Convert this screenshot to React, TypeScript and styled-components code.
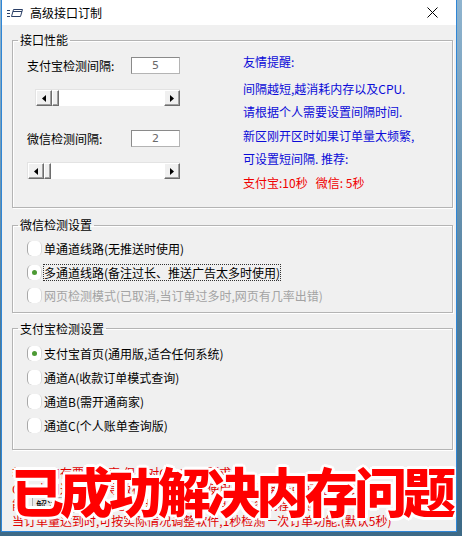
import * as React from 'react';
import styled, { createGlobalStyle } from 'styled-components';

const GlobalStyle = createGlobalStyle`
	html, body {
		margin: 0;
		padding: 0;
	}
	body {
		width: 462px;
		height: 536px;
		overflow: hidden;
		font-family: "Noto Sans CJK SC", "DejaVu Sans", sans-serif;
		font-size: 12px;
		color: #000;
	}
`;

const Desktop = styled.div`
	width: 462px;
	height: 536px;
	box-sizing: border-box;
	padding: 0 5px 4px 1px;
	background: linear-gradient(180deg, #8fb4cf 0%, #4f7d9c 60%, #3d6a86 100%);
`;

const Window = styled.div`
	position: relative;
	height: 100%;
	box-sizing: border-box;
	border: 1px solid #2f86d6;
	border-top: none;
	background: #f0f0f0;
	display: flex;
	flex-direction: column;
	overflow: hidden;
`;

const TitleBar = styled.div`
	height: 25px;
	flex: none;
	background: #fff;
	display: flex;
	align-items: center;
	padding-left: 5px;
`;

const Title = styled.span`
	margin-left: 7px;
	font-size: 12px;
	line-height: 16px;
`;

const CloseButton = styled.div`
	margin-left: auto;
	width: 46px;
	height: 25px;
	display: flex;
	align-items: center;
	justify-content: center;
	margin-right: 1px;
`;

const Body = styled.div`
	padding-top: 7px;
	display: flex;
	flex-direction: column;
`;

const Group = styled.fieldset<{ $pb: number; $mt?: number }>`
	margin: ${p => p.$mt || 0}px 0 0 10px;
	width: 441px;
	min-width: 0;
	box-sizing: border-box;
	padding: 0 0 ${p => p.$pb}px 0;
	border: 1px solid #b4b4b4;
	box-shadow: inset 1px 1px 0 #fff, 1px 1px 0 #fff;
`;

const Legend = styled.legend`
	margin-left: 5px;
	padding: 0 2px;
	line-height: 16px;
	font-size: 12px;
`;

const PerfRow = styled.div`
	display: flex;
	align-items: flex-start;
`;

const LeftCol = styled.div`
	width: 230px;
	box-sizing: border-box;
	padding-left: 14px;
	display: flex;
	flex-direction: column;
`;

const FieldRow = styled.div<{ $mt: number }>`
	margin-top: ${p => p.$mt}px;
	display: flex;
	align-items: center;
	height: 17px;
`;

const FieldLabel = styled.span`
	width: 104px;
	line-height: 16px;
`;

const NumberBox = styled.div`
	width: 49px;
	height: 17px;
	box-sizing: border-box;
	border: 1px solid #8a8a8a;
	border-right-color: #b4b4b4;
	border-bottom-color: #b4b4b4;
	background: #fff;
	color: #6a6a6a;
	text-align: center;
	line-height: 15px;
	font-family: "DejaVu Sans", sans-serif;
	font-size: 11px;
`;

const ScrollBar = styled.div<{ $w: number; $ml: number }>`
	margin-top: 15px;
	margin-left: ${p => p.$ml}px;
	width: ${p => p.$w}px;
	height: 17px;
	box-sizing: border-box;
	display: flex;
	background: #fff;
	border-top: 1px solid #e3e3e3;
	border-left: 1px solid #e3e3e3;
`;

const ScrollButton = styled.div`
	width: 16px;
	height: 16px;
	box-sizing: border-box;
	flex: none;
	background: #f0f0f0;
	border: 1px solid;
	border-color: #fff #6d6d6d #6d6d6d #fff;
	box-shadow: inset -1px -1px 0 #a0a0a0;
	display: flex;
	align-items: center;
	justify-content: center;
`;

const Thumb = styled.div`
	width: 7px;
	height: 16px;
	box-sizing: border-box;
	flex: none;
	background: #f0f0f0;
	border: 1px solid;
	border-color: #fff #6d6d6d #6d6d6d #fff;
	box-shadow: inset -1px -1px 0 #a0a0a0;
`;

const Track = styled.div`
	flex: 1;
`;

const Notes = styled.div`
	margin-top: 2px;
	display: flex;
	flex-direction: column;
`;

const Note = styled.div<{ $red?: boolean; $gap?: number }>`
	height: 23.5px;
	line-height: 23.5px;
	margin-bottom: ${p => p.$gap || 0}px;
	color: ${p => (p.$red ? '#f00000' : '#0b0bd8')};
	white-space: nowrap;
`;

const Options = styled.div<{ $mt: number }>`
	margin-top: ${p => p.$mt}px;
	display: flex;
	flex-direction: column;
`;

const Option = styled.div<{ $h: number; $disabled?: boolean }>`
	height: ${p => p.$h}px;
	padding-left: 14px;
	display: flex;
	align-items: center;
	color: ${p => (p.$disabled ? '#a3a3a3' : '#000')};
	white-space: nowrap;
`;

const Radio = styled.span<{ $checked?: boolean }>`
	width: 15px;
	height: 15px;
	box-sizing: border-box;
	flex: none;
	margin-right: 2px;
	background: #fff;
	border-radius: 5px;
	border-left: 1px solid #a8a8a8;
	border-right: 1px solid #d8d8d8;
	display: flex;
	align-items: center;
	justify-content: center;
	&::after {
		content: '';
		display: ${p => (p.$checked ? 'block' : 'none')};
		width: 5px;
		height: 5px;
		border-radius: 50%;
		background: #4c9a34;
	}
`;

const OptionText = styled.span<{ $focus?: boolean }>`
	line-height: 15px;
	outline: ${p => (p.$focus ? '1px dotted #333' : 'none')};
	outline-offset: 0;
`;

const Footer = styled.div`
	margin-top: 15px;
	padding-left: 10px;
	color: #e00000;
	display: flex;
	flex-direction: column;
`;

const FooterLine = styled.div`
	height: 16px;
	line-height: 16px;
	white-space: nowrap;
	display: flex;
	align-items: center;
`;

const SmallButton = styled.span`
	margin: 0 4px 0 8px;
	padding: 0 3px;
	height: 14px;
	line-height: 14px;
	border: 1px solid #adadad;
	background: #e9e9e9;
	color: #000;
	font-size: 11px;
`;

const Banner = styled.div`
	position: absolute;
	left: 9px;
	top: 465px;
	font-family: "Noto Sans CJK SC", sans-serif;
	font-weight: 900;
	font-size: 53px;
	line-height: 50px;
	letter-spacing: -4px;
	color: #ff0000;
	white-space: nowrap;
	text-shadow:
		3px 0 0 #fff, -3px 0 0 #fff, 0 3px 0 #fff, 0 -3px 0 #fff,
		2px 2px 0 #fff, -2px 2px 0 #fff, 2px -2px 0 #fff, -2px -2px 0 #fff;
`;

const AppIcon = () => (
	<svg width="16" height="12" viewBox="0 0 16 12">
		<g stroke="#2a3f66" strokeWidth="1" fill="none">
			<line x1="0" y1="3.5" x2="3" y2="3.5" />
			<line x1="0" y1="6.5" x2="3" y2="6.5" />
			<line x1="0" y1="9.5" x2="3" y2="9.5" />
			<path d="M6.5 2.5 H15.5 L13.5 9.5 H4.5 Z" />
			<line x1="6" y1="4.5" x2="15" y2="4.5" />
		</g>
	</svg>
);

const CloseIcon = () => (
	<svg width="11" height="11" viewBox="0 0 11 11">
		<path d="M0.5 0.5 L10.5 10.5 M10.5 0.5 L0.5 10.5" stroke="#000" strokeWidth="1" />
	</svg>
);

const Arrow = ({ dir }: { dir: 'left' | 'right' }) => (
	<svg width="4" height="7" viewBox="0 0 4 7">
		<path d={dir === 'left' ? 'M4 0 L0 3.5 L4 7 Z' : 'M0 0 L4 3.5 L0 7 Z'} fill="#000" />
	</svg>
);

const Slider = ({ width, left }: { width: number; left: number }) => (
	<ScrollBar $w={width} $ml={left}>
		<ScrollButton>
			<Arrow dir="left" />
		</ScrollButton>
		<Thumb />
		<Track />
		<ScrollButton>
			<Arrow dir="right" />
		</ScrollButton>
	</ScrollBar>
);

const App = () => {
	const wechat = [
		{ text: '单通道线路(无推送时使用)' },
		{ text: '多通道线路(备注过长、推送广告太多时使用)', checked: true, focus: true },
		{ text: '网页检测模式(已取消,当订单过多时,网页有几率出错)', disabled: true },
	];
	const alipay = [
		{ text: '支付宝首页(通用版,适合任何系统)', checked: true },
		{ text: '通道A(收款订单模式查询)' },
		{ text: '通道B(需开通商家)' },
		{ text: '通道C(个人账单查询版)' },
	];

	return (
		<Desktop>
			<GlobalStyle />
			<Window>
				<TitleBar>
					<AppIcon />
					<Title>高级接口订制</Title>
					<CloseButton>
						<CloseIcon />
					</CloseButton>
				</TitleBar>
				<Body>
					<Group $pb={13}>
						<Legend>接口性能</Legend>
						<PerfRow>
							<LeftCol>
								<FieldRow $mt={9}>
									<FieldLabel>支付宝检测间隔:</FieldLabel>
									<NumberBox>5</NumberBox>
								</FieldRow>
								<Slider width={145} left={8} />
								<FieldRow $mt={24}>
									<FieldLabel>微信检测间隔:</FieldLabel>
									<NumberBox>2</NumberBox>
								</FieldRow>
								<Slider width={153} left={0} />
							</LeftCol>
							<Notes>
								<Note $gap={3}>友情提醒:</Note>
								<Note>间隔越短,越消耗内存以及CPU.</Note>
								<Note>请根据个人需要设置间隔时间.</Note>
								<Note>新区刚开区时如果订单量太频繁,</Note>
								<Note>可设置短间隔. 推荐:</Note>
								<Note $red>支付宝:10秒&nbsp;&nbsp;&nbsp;微信: 5秒</Note>
							</Notes>
						</PerfRow>
					</Group>
					<Group $pb={4} $mt={9}>
						<Legend>微信检测设置</Legend>
						<Options $mt={4}>
							{wechat.map((o, i) => (
								<Option key={i} $h={23.5} $disabled={o.disabled}>
									<Radio $checked={o.checked} />
									<OptionText $focus={o.focus}>{o.text}</OptionText>
								</Option>
							))}
						</Options>
					</Group>
					<Group $pb={11} $mt={8}>
						<Legend>支付宝检测设置</Legend>
						<Options $mt={5}>
							{alipay.map((o, i) => (
								<Option key={i} $h={24} $disabled={false}>
									<Radio $checked={o.checked} />
									<OptionText>{o.text}</OptionText>
								</Option>
							))}
						</Options>
					</Group>
					<Footer>
						<FooterLine>软件对内存要求不高,但是对CPU有所要求.</FooterLine>
						<FooterLine>CPU占用过高时会导致检测延迟,建议使用独立服务器或配置较好的机器.</FooterLine>
						<FooterLine>
							能<SmallButton>解决办法&gt;</SmallButton>订单量过大时请参考说明,开启多线程检测.
						</FooterLine>
						<FooterLine>当订单量达到时,可按实际情况调整软件,1秒检测一次订单功能.(默认5秒)</FooterLine>
					</Footer>
				</Body>
				<Banner>已成功解决内存问题</Banner>
			</Window>
		</Desktop>
	);
};

export default App;
